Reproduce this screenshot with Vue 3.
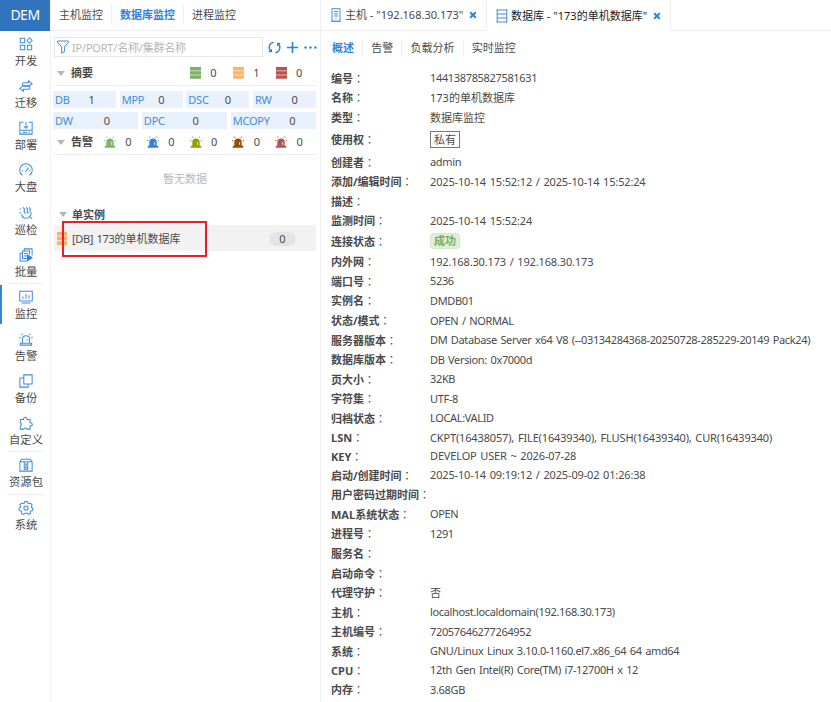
<template>
  <div class="app">
    <aside class="sidebar">
      <div class="logo">DEM</div>
      <nav class="menu">
        <div
          v-for="item in menus"
          :key="item.label"
          class="menuItem"
          :class="{ active: item.active, line: item.line }"
        >
          <svg class="menuIcon" viewBox="0 0 16 16">
            <path v-for="d in item.paths" :key="d" :d="d" />
            <path v-if="item.fill" class="solid" :d="item.fill" />
          </svg>
          <span>{{ item.label }}</span>
        </div>
      </nav>
    </aside>

    <section class="tree">
      <div class="treeTabs">
        <span>主机监控</span>
        <span class="current">数据库监控</span>
        <span>进程监控</span>
      </div>
      <div class="toolbar">
        <div class="search">
          <svg class="funnel" viewBox="0 0 12 14">
            <path d="M.7 1h10.6v1.6L7.4 6.8v5L4.6 13V6.8L.7 2.6z" />
          </svg>
          <span>IP/PORT/名称/集群名称</span>
        </div>
        <svg class="tool" viewBox="0 0 14 14">
          <path d="M6 1.5A5.5 5.5 0 0 0 3.2 11.2M.8 11.4h2.8V8.6M8 12.5A5.5 5.5 0 0 0 10.8 2.8M13.2 2.6h-2.8v2.8" />
        </svg>
        <svg class="tool plus" viewBox="0 0 14 14"><path d="M7 1v12M1 7h12" /></svg>
        <svg class="tool dots" viewBox="0 0 14 14">
          <circle cx="1.7" cy="7" r="1.3" /><circle cx="7" cy="7" r="1.3" /><circle cx="12.3" cy="7" r="1.3" />
        </svg>
      </div>

      <div class="statRow summary">
        <i class="arrow"></i><b>摘要</b>
        <div v-for="s in summary" :key="s.color" class="stat">
          <svg viewBox="0 0 11 12" :fill="s.color">
            <path d="M0 0h11v3.2H0zM0 4.3h11v3.2H0zM0 8.6h11v3.2H0z" />
            <path opacity=".5" d="M0 3h11v1.5H0zM0 7.3h11v1.5H0z" />
          </svg>
          <span>{{ s.count }}</span>
        </div>
      </div>

      <div class="types">
        <div class="typeRow">
          <div v-for="t in types.slice(0, 4)" :key="t.name" class="type">
            <em>{{ t.name }}</em><span>{{ t.count }}</span>
          </div>
        </div>
        <div class="typeRow three">
          <div v-for="t in types.slice(4)" :key="t.name" class="type">
            <em>{{ t.name }}</em><span>{{ t.count }}</span>
          </div>
        </div>
      </div>

      <div class="statRow alarms">
        <i class="arrow"></i><b>告警</b>
        <div v-for="color in alarms" :key="color" class="stat">
          <svg viewBox="0 0 12 12" :fill="color" :stroke="color">
            <path stroke="none" d="M2.3 10V6.3a3.7 3.7 0 0 1 7.4 0V10zM.8 9.8h10.4v2H.8z" />
            <path fill="none" d="M0 4.4l1.3.7M12 4.4l-1.3.7M2.3.6l.8 1.2M9.7.6l-.8 1.2" />
            <path fill="none" stroke="#fff" stroke-width=".7" d="M7.6 6v3" />
          </svg>
          <span>0</span>
        </div>
      </div>

      <div class="empty">暂无数据</div>
      <div class="group"><i class="arrow"></i><b>单实例</b></div>
      <div class="instance">
        <svg class="dbIcon" viewBox="0 0 10 13">
          <path d="M0 0h10v3.5H0zM0 4.6h10v3.6H0zM0 9.3h10v3.6H0z" />
        </svg>
        <span class="instanceName"><span class="latin">[DB] 173</span>的单机数据库</span>
        <span class="badge">0</span>
        <div class="mark"></div>
      </div>
    </section>

    <main class="main">
      <div class="pageTabs">
        <div class="pageTab host">
          <svg class="tabIcon" viewBox="0 0 10 14">
            <path d="M1 .7h8v12.6H1zM3 3.4h4M3 5.8h4M3 8h4M.2 13.3h9.6" /><path d="M4.4 10.8h1.2" />
          </svg>
          <span>主机 - "192.168.30.173"</span>
          <svg class="close" viewBox="0 0 8 8"><path d="M1.2 1.2l5.6 5.6M6.8 1.2L1.2 6.8" /></svg>
        </div>
        <div class="pageTab db">
          <svg class="tabIcon wide" viewBox="0 0 12 14">
            <path d="M1.2.7v12.6M10.8.7v12.6M.5 1h11M1 5h10M1 9h10M.5 13h11" />
          </svg>
          <span>数据库 - "173的单机数据库"</span>
          <svg class="close" viewBox="0 0 8 8"><path d="M1.2 1.2l5.6 5.6M6.8 1.2L1.2 6.8" /></svg>
        </div>
        <div class="rest"></div>
      </div>
      <div class="subTabs">
        <span class="current">概述</span>
        <span>告警</span>
        <span>负载分析</span>
        <span>实时监控</span>
      </div>
      <div class="details">
        <div v-for="row in details" :key="row.label" class="detail" :class="row.type">
          <div class="label">{{ row.label }}<i>：</i></div>
          <div class="value" :class="{ latin: isLatin(row.value), loose: row.loose }">
            <span>{{ row.value }}</span>
          </div>
        </div>
      </div>
    </main>
  </div>
</template>

<script setup>
import { ref } from "vue";

// line: separator above the item
const menus = ref([
  { label: "开发", paths: ["M1.5 1.5h5v5h-5z", "M12 .8l3 3.2-3 3.2L9 4z", "M1.5 9.5h5v5h-5z", "M9.5 9.5h5v5h-5z"] },
  { label: "迁移", paths: ["M5 4.2h6V2l4 3.4-3 2.2H5.5a1.7 1.7 0 0 1 0-3.4z", "M11 8.2a1.7 1.7 0 0 1 0 3.4H5V14l-4-3.2 3-2.6z"] },
  { label: "部署", paths: ["M5 1.5H1v13.5h14V1.5H11", "M8 1v7M5.5 5.7L8 8.3l2.5-2.6", "M1.5 10.5h13M4 12.8h5M11 12.8h1.5"] },
  { label: "大盘", paths: ["M4 14A7.2 7.2 0 1 1 12 14", "M7.3 10L11 5.5", "M3.5 8.5h1M8 3.2v1M12.4 8.5h-1"] },
  { label: "巡检", paths: ["M3 9.5a5 5 0 0 0 9 2.5l3 2.7M12 12a6 6 0 0 0 2.2-3.5", "M4.5 1.5q2.5 1.5 1.5 3.5t1.5 3.5M8 1.5q2.5 1.5 1.5 3.5t1.5 3.5M11.3 1.5q2.5 1.5 1.5 3.5t1.2 3", "M.8 3.5h1.6M.8 7.5h1.6"] },
  { label: "批量", paths: ["M6 3.5V1h9v7.5", "M4 6V3.5h8v4", "M9 14.8H1.2V6H4.5", "M4 6v6h5M6 6.3h4M6 9h2.5"], fill: "M9 6.8l7 4.4-7 4.4z" },
  { label: "监控", active: true, line: true, paths: ["M.8 1.5h14.4v11H.8z", "M4.5 10V7.5M8 10V4.5M11.5 10V6", "M3 14.9h10"] },
  { label: "告警", paths: ["M4 12.5V8.3a4 4 0 0 1 8 0v4.2", "M1.5 15h13v-2.2h-13z", "M3 2l1 1.7M13 2l-1 1.7M.4 6l1.7.7M15.6 6l-1.7.7M9.3 8.2v1.8"] },
  { label: "备份", paths: ["M5.5 1h9.5v10.5H5.5z", "M5.5 4.5H1V15h9.5v-3.5"] },
  { label: "自定义", paths: ["M1.5 4h3.8a2 2 0 1 1 3.8 0h3.6v3.8a1.9 1.9 0 1 1 0 3.6V15H9.2a2 2 0 0 0-3.7 0h-4v-3.6a1.9 1.9 0 0 0 0-3.6z"] },
  { label: "资源包", line: true, paths: ["M1 4.3h14V15H1z", "M1 4.3l2-3h10l2 3M6 4.5v8.3h4V4.5M7 7h2M7 9h2M7 11h2"] },
  { label: "系统", line: true, paths: ["M6.6.6h2.8l.5 1.9 1.5.7 1.8-.8 1.8 2-.8 1.7.4 1.4 1.4.9-.4 2.5-1.9.4-.8 1.3.2 1.8-2.3 1-1.4-1.3H6.6l-1.4 1.3-2.3-1 .2-1.8-.8-1.3-1.9-.4L0 8.4l1.4-.9.4-1.4L1 4.4l1.8-2 1.8.8 1.5-.7z", "M10.4 8a2.4 2.4 0 1 1-4.8 0 2.4 2.4 0 0 1 4.8 0z"] },
]);

const summary = ref([
  { color: "#7db163", count: 0 },
  { color: "#ffb366", count: 1 },
  { color: "#b85450", count: 0 },
]);

const types = ref([
  { name: "DB", count: 1 },
  { name: "MPP", count: 0 },
  { name: "DSC", count: 0 },
  { name: "RW", count: 0 },
  { name: "DW", count: 0 },
  { name: "DPC", count: 0 },
  { name: "MCOPY", count: 0 },
]);

const alarms = ref(["#7fb56b", "#2f83db", "#999900", "#994c00", "#b85450"]);

const details = ref([
  { label: "编号", value: "144138785827581631" },
  { label: "名称", value: "173的单机数据库" },
  { label: "类型", value: "数据库监控" },
  { label: "使用权", value: "私有", type: "boxed" },
  { label: "创建者", value: "admin" },
  { label: "添加/编辑时间", value: "2025-10-14 15:52:12 / 2025-10-14 15:52:24", loose: true },
  { label: "描述", value: "" },
  { label: "监测时间", value: "2025-10-14 15:52:24", loose: true },
  { label: "连接状态", value: "成功", type: "success" },
  { label: "内外网", value: "192.168.30.173 / 192.168.30.173", loose: true },
  { label: "端口号", value: "5236" },
  { label: "实例名", value: "DMDB01" },
  { label: "状态/模式", value: "OPEN / NORMAL" },
  { label: "服务器版本", value: "DM Database Server x64 V8 (--03134284368-20250728-285229-20149 Pack24)" },
  { label: "数据库版本", value: "DB Version: 0x7000d" },
  { label: "页大小", value: "32KB" },
  { label: "字符集", value: "UTF-8" },
  { label: "归档状态", value: "LOCAL:VALID" },
  { label: "LSN", value: "CKPT(16438057), FILE(16439340), FLUSH(16439340), CUR(16439340)", type: "short", loose: true },
  { label: "KEY", value: "DEVELOP USER ~ 2026-07-28", type: "short", loose: true },
  { label: "启动/创建时间", value: "2025-10-14 09:19:12 / 2025-09-02 01:26:38", loose: true },
  { label: "用户密码过期时间", value: "" },
  { label: "MAL系统状态", value: "OPEN" },
  { label: "进程号", value: "1291" },
  { label: "服务名", value: "" },
  { label: "启动命令", value: "" },
  { label: "代理守护", value: "否" },
  { label: "主机", value: "localhost.localdomain(192.168.30.173)" },
  { label: "主机编号", value: "72057646277264952" },
  { label: "系统", value: "GNU/Linux Linux 3.10.0-1160.el7.x86_64 64 amd64" },
  { label: "CPU", value: "12th Gen Intel(R) Core(TM) i7-12700H x 12", type: "short" },
  { label: "内存", value: "3.68GB" },
]);

const isLatin = (text) => /^[\x20-\x7e]+$/.test(text);
</script>

<style>
body {
  background: #fff;
}
</style>

<style scoped>
.app {
  display: flex;
  width: 831px;
  height: 702px;
  overflow: hidden;
  font-family: "Noto Sans", "Noto Sans CJK SC", sans-serif;
  font-size: 11px;
  line-height: 16px;
  color: #4a4a4a;
  white-space: nowrap;
}
.app * {
  box-sizing: border-box;
}
svg {
  flex: none;
  overflow: visible;
}
.latin {
  letter-spacing: -0.34px;
  word-spacing: 1px;
}
.latin.loose {
  letter-spacing: -0.15px;
}

/* left menu */
.sidebar {
  width: 51px;
  flex: none;
  border-right: 1px solid #f3f3f3;
}
.logo {
  width: 50px;
  height: 31px;
  line-height: 29px;
  text-align: center;
  font-size: 14px;
  letter-spacing: -0.5px;
  color: #fff;
  background: #3074bd;
}
.menu {
  margin-top: -1px;
}
.menuItem {
  height: 42.15px;
  padding-top: 7px;
  padding-left: 3px;
  display: flex;
  flex-direction: column;
  align-items: center;
  font-size: 11.3px;
  margin-right: 1px;
}
.menuItem.line {
  background: linear-gradient(#eee, #eee) 8px 0 / 35px 1px no-repeat;
}
.menuItem.active {
  background:
    linear-gradient(#eee, #eee) 8px 0 / 35px 1px no-repeat,
    linear-gradient(#3385d9, #3385d9) 0 2px / 2px 39px no-repeat;
}
.menuIcon {
  width: 14px;
  height: 14px;
  margin-bottom: 2px;
  fill: none;
  stroke: #3f8cdd;
  stroke-width: 1.15;
}
.menuIcon .solid {
  fill: #2f80d8;
  stroke: none;
}

/* tree panel */
.tree {
  width: 269px;
  flex: none;
}
.treeTabs {
  display: flex;
  align-items: center;
  height: 31px;
  padding-bottom: 2px;
  border-bottom: 1px solid #eee;
}
.treeTabs span {
  padding: 0 8px;
  height: 19px;
  line-height: 19px;
  border-right: 1px solid #eee;
}
.treeTabs span:last-child {
  border-right: 0;
}
.treeTabs .current,
.subTabs .current {
  color: #2f83db;
  font-weight: bold;
}
.toolbar {
  display: flex;
  align-items: center;
  margin-top: 6px;
  padding-left: 3px;
}
.search {
  display: flex;
  align-items: center;
  width: 209px;
  height: 20px;
  padding-left: 2px;
  border: 1px solid #e6e6e6;
  color: #b5b5b5;
  font-size: 11px;
  letter-spacing: -0.2px;
}
.search span {
  padding-top: 1px;
}
.funnel {
  width: 12px;
  height: 14px;
  margin-right: 3px;
  fill: none;
  stroke: #3f8cdd;
}
.tool {
  width: 13px;
  height: 13px;
  margin-left: 5px;
  fill: none;
  stroke: #2f83db;
  stroke-width: 1.4;
}
.tool.plus {
  stroke-width: 1.8;
}
.tool.dots {
  fill: #2f83db;
  stroke: none;
}
.statRow {
  display: flex;
  align-items: center;
  width: 262px;
  margin-left: 3px;
  border-bottom: 1px solid #eee;
}
.arrow {
  flex: none;
  width: 0;
  height: 0;
  border: 4px solid transparent;
  border-top: 5px solid #b5b5b5;
  border-bottom: 0;
  margin-left: 3px;
  margin-right: 6px;
}
.statRow b {
  width: 22px;
  flex: none;
}
.summary {
  height: 29px;
  padding-top: 4px;
}
.stat {
  display: flex;
  flex: none;
  align-items: center;
  width: 42.8px;
}
.stat svg {
  width: 11px;
  height: 12px;
}
.stat span {
  width: 23px;
  text-align: center;
  margin-left: 1px;
}
.summary b {
  margin-right: 97px;
}
.types {
  width: 263px;
  margin: 5px 0 0 2px;
}
.typeRow {
  display: grid;
  grid-template-columns: repeat(4, 1fr);
  gap: 3.5px;
  margin-bottom: 4px;
}
.typeRow.three {
  grid-template-columns: repeat(3, 1fr);
  margin-bottom: 0;
}
.type {
  display: grid;
  grid-template-columns: 1fr 1fr;
  height: 17px;
  padding-left: 2px;
  line-height: 18px;
  background: #e9f2fc;
}
.type em {
  font-style: normal;
  color: #3f8cdd;
  letter-spacing: -0.2px;
}
.type span {
  padding-left: 6px;
}
.type:first-child span {
  padding-left: 3px;
}
.three .type:nth-child(n) span {
  padding-left: 7px;
}
.three .type:last-child span {
  padding-left: 15px;
}
.alarms {
  height: 26px;
  padding-top: 1px;
}
.alarms b {
  margin-right: 11px;
}
.alarms .stat svg {
  width: 12px;
}
.empty {
  height: 48px;
  line-height: 48px;
  width: 269px;
  padding-right: 1px;
  text-align: center;
  color: #b8b8b8;
}
.group {
  display: flex;
  align-items: center;
  height: 22px;
  padding: 1px 0 0 5px;
}
.group b {
  margin-left: -1px;
}
.instance {
  position: relative;
  display: flex;
  align-items: center;
  width: 262px;
  height: 26px;
  margin-left: 3px;
  padding-left: 3px;
  background: #f2f2f2;
}
.instanceName {
  padding-top: 2px;
}
.dbIcon {
  width: 10px;
  height: 13px;
  margin-right: 5px;
  fill: #ffae5c;
}
.badge {
  width: 27px;
  height: 14px;
  margin: 2px 20px 0 auto;
  line-height: 14px;
  text-align: center;
  border-radius: 7px;
  background: #e4e4e4;
}
/* highlight frame over the instance row */
.mark {
  position: absolute;
  left: 8px;
  top: -4px;
  width: 145px;
  height: 36px;
  border: 2px solid #ee1c25;
}

/* content */
.main {
  flex: 1;
  min-width: 0;
  border-left: 1px solid #f0f0f0;
}
.pageTabs {
  display: flex;
  height: 31px;
}
.pageTab {
  display: flex;
  align-items: center;
  padding-left: 10px;
  border-right: 1px solid #eee;
}
.host {
  width: 166px;
  border-bottom: 1px solid #eee;
}
.db {
  width: 184px;
  padding-left: 9px;
  color: #222;
}
.rest {
  flex: 1;
  border-bottom: 1px solid #eee;
}
.tabIcon {
  width: 10px;
  height: 14px;
  margin-right: 4px;
  fill: none;
  stroke: #3f8cdd;
}
.tabIcon.wide {
  width: 12px;
  margin-right: 3px;
}
.close {
  width: 8px;
  height: 8px;
  margin-left: 6px;
  stroke: #2f83db;
  stroke-width: 2;
}
.subTabs {
  display: flex;
  padding: 9px 0 0 3px;
  height: 37.6px;
}
.subTabs span {
  height: 16px;
  padding: 0 8.1px;
  border-right: 1px solid #eee;
}
.subTabs span:last-child {
  border-right: 0;
}
.details {
  padding-left: 10px;
}
.detail {
  display: flex;
  align-items: center;
  height: 19.6px;
}
.detail.short {
  height: 18.5px;
}
.detail.boxed {
  height: 25px;
}
.detail.success {
  height: 21.2px;
}
.label {
  width: 99px;
  flex: none;
  font-weight: bold;
}
.label i {
  font-family: "Noto Sans CJK JP", sans-serif;
  font-style: normal;
  font-weight: normal;
}
.boxed .value span {
  display: block;
  padding: 0 3px;
  height: 17px;
  line-height: 15px;
  border: 1px solid #777;
}
.success .value span {
  display: block;
  padding: 0 3px;
  height: 16px;
  line-height: 14px;
  color: #74af59;
  font-weight: bold;
  border: 1px solid #d3e7c9;
  border-radius: 3px;
  background: #e0eed9;
}
</style>
